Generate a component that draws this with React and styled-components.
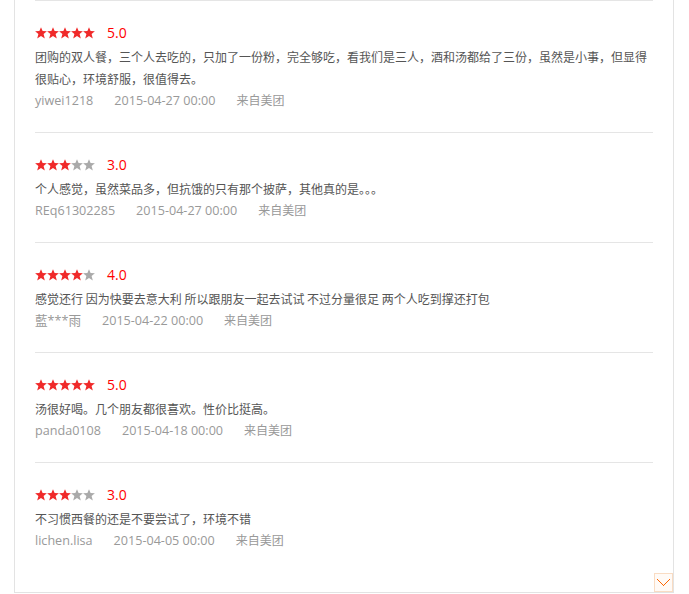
import React from "react";
import styled, { createGlobalStyle } from "styled-components";

const Global = createGlobalStyle`
  html, body { margin: 0; padding: 0; background: #fff; }
  body { font-family: "Open Sans", "Noto Sans CJK SC", sans-serif; }
`;

const Panel = styled.div`
  position: relative;
  box-sizing: border-box;
  width: 660px;
  margin-left: 14px;
  padding: 0 20px 20px;
  border: 1px solid #e3e3e3;
  border-top: none;
  background: #fff;
`;

const Item = styled.div`
  border-top: 1px solid #e5e5e5;
  padding: 23px 0 20px;
`;

const RatingRow = styled.div`
  display: flex;
  align-items: center;
  height: 18px;
  margin-bottom: 4px;
`;

const Stars = styled.div`
  display: flex;
  width: 60px;
`;

const StarBox = styled.svg`
  width: 12px;
  height: 12px;
  display: block;
  flex: none;
`;

const Score = styled.span`
  margin-left: 12px;
  font-size: 14px;
  color: #ff0000;
  line-height: 18px;
`;

const Content = styled.p`
  margin: 0;
  font-size: 12px;
  line-height: 22px;
  color: #555;
  font-family: "Noto Sans CJK SC", sans-serif;
`;

const Meta = styled.div`
  display: flex;
  gap: 21px;
  font-size: 12.6px;
  line-height: 22px;
  color: #999;
`;

const MetaText = styled.span`
  font-size: ${(p) => (p.$cjk ? "12px" : "inherit")};
`;

const MoreButton = styled.div`
  position: absolute;
  right: 0;
  bottom: 0;
  box-sizing: border-box;
  width: 19px;
  height: 19px;
  border: 1px solid #f9dcc3;
  background: #fffaf6;
  display: flex;
  align-items: center;
  justify-content: center;
`;

const Star = ({ on }) => (
  <StarBox viewBox="0 0 12 12">
    <polygon
      points="6,0.2 7.6,4.1 11.9,4.3 8.6,7 9.8,11.6 6,9 2.2,11.6 3.4,7 0.1,4.3 4.4,4.1"
      fill={on ? "#f02a2a" : "#aaaaaa"}
    />
  </StarBox>
);

const reviews = [
  {
    score: 5,
    text: "团购的双人餐，三个人去吃的，只加了一份粉，完全够吃，看我们是三人，酒和汤都给了三份，虽然是小事，但显得很贴心，环境舒服，很值得去。",
    user: "yiwei1218",
    date: "2015-04-27 00:00",
  },
  {
    score: 3,
    text: "个人感觉，虽然菜品多，但抗饿的只有那个披萨，其他真的是。。。",
    user: "REq61302285",
    date: "2015-04-27 00:00",
  },
  {
    score: 4,
    text: "感觉还行 因为快要去意大利 所以跟朋友一起去试试 不过分量很足 两个人吃到撑还打包",
    user: "藍***雨",
    date: "2015-04-22 00:00",
  },
  {
    score: 5,
    text: "汤很好喝。几个朋友都很喜欢。性价比挺高。",
    user: "panda0108",
    date: "2015-04-18 00:00",
  },
  {
    score: 3,
    text: "不习惯西餐的还是不要尝试了，环境不错",
    user: "lichen.lisa",
    date: "2015-04-05 00:00",
  },
];

export default function App() {
  return (
    <>
      <Global />
      <Panel>
        {reviews.map((r, i) => (
          <Item key={i}>
            <RatingRow>
              <Stars>
                {[0, 1, 2, 3, 4].map((k) => (
                  <Star key={k} on={k < r.score} />
                ))}
              </Stars>
              <Score>{r.score.toFixed(1)}</Score>
            </RatingRow>
            <Content>{r.text}</Content>
            <Meta>
              <MetaText>{r.user}</MetaText>
              <MetaText>{r.date}</MetaText>
              <MetaText $cjk>来自美团</MetaText>
            </Meta>
          </Item>
        ))}
        <MoreButton>
          <svg width="13" height="8" viewBox="0 0 13 8" shapeRendering="crispEdges">
            <polyline points="0.5,0.5 6.5,6.5 12.5,0.5" fill="none" stroke="#ff6600" strokeWidth="1" />
          </svg>
        </MoreButton>
      </Panel>
    </>
  );
}
